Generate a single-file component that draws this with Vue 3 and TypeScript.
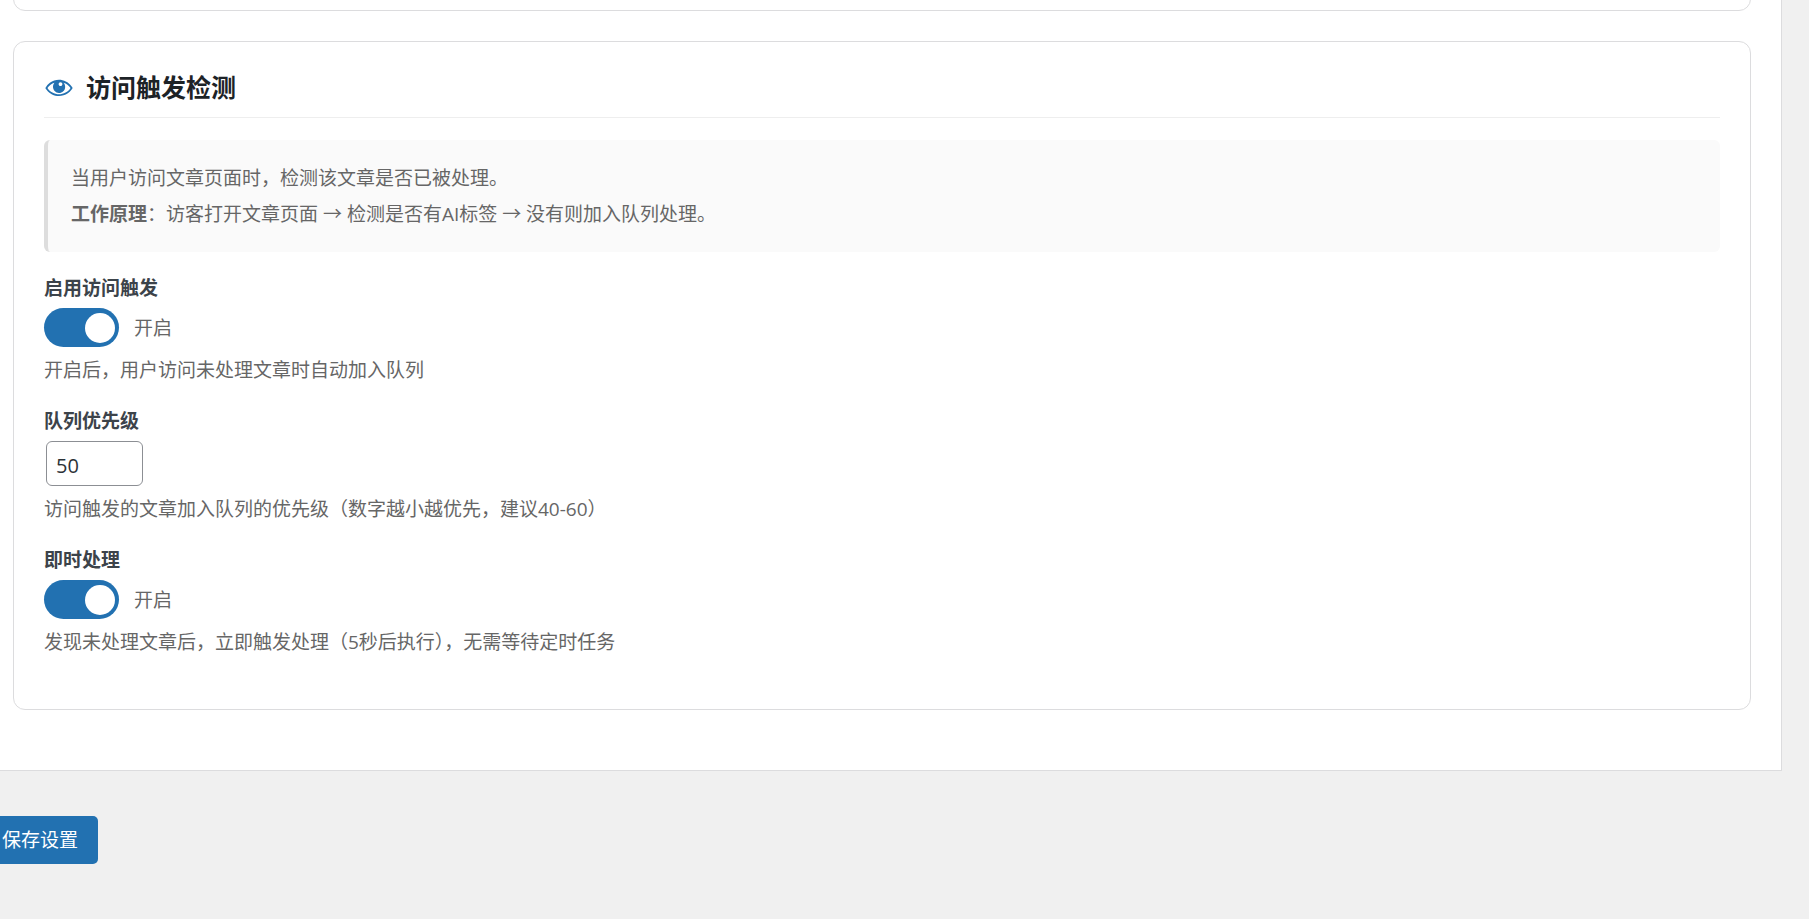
<script setup lang="ts">
import { ref } from 'vue'

const visitTrigger = ref<boolean>(true)
const priority = ref<number>(50)
const instantProcess = ref<boolean>(true)
</script>

<template>
  <form class="page" @submit.prevent>
    <main class="panel">
      <section class="card card-previous" aria-hidden="true"></section>

      <section class="card">
        <h2 class="card-title">
          <svg class="title-icon" viewBox="0 0 20 20" aria-hidden="true">
            <path
              d="M18.3 9.5C15 4.9 8.5 3.8 3.9 7.2c-1.2.9-2.2 2.1-3 3.4.2.4.5.8.8 1.2 3.3 4.6 9.6 5.6 14.2 2.4.9-.7 1.7-1.4 2.4-2.4.3-.4.5-.8.8-1.2-.3-.4-.5-.8-.8-1.1zm-8.2-2.3c.5-.5 1.3-.5 1.8 0s.5 1.3 0 1.8-1.3.5-1.8 0-.5-1.3 0-1.8zm-.1 7.7c-3.1 0-6-1.6-7.7-4.2C3.5 9 5.1 7.8 7 7.2c-.7.8-1 1.7-1 2.7 0 2.2 1.7 4.1 4 4.1 2.2 0 4.1-1.7 4.1-4v-.1c0-1-.4-2-1.1-2.7 1.9.6 3.5 1.8 4.7 3.5-1.7 2.6-4.6 4.2-7.7 4.2z"
            />
          </svg>
          <span>访问触发检测</span>
        </h2>

        <p class="notice">
          当用户访问文章页面时，检测该文章是否已被处理。<br />
          <strong>工作原理</strong>：访客打开文章页面 → 检测是否有AI标签 → 没有则加入队列处理。
        </p>

        <div class="field">
          <label class="field-label" for="visit-trigger">启用访问触发</label>
          <label class="switch-row">
            <input id="visit-trigger" v-model="visitTrigger" class="switch" type="checkbox" />
            <span>{{ visitTrigger ? '开启' : '关闭' }}</span>
          </label>
          <p class="hint">开启后，用户访问未处理文章时自动加入队列</p>
        </div>

        <div class="field">
          <label class="field-label" for="priority">队列优先级</label>
          <input id="priority" v-model="priority" class="number" type="number" min="1" max="100" />
          <p class="hint">访问触发的文章加入队列的优先级（数字越小越优先，建议40-60）</p>
        </div>

        <div class="field">
          <label class="field-label" for="instant-process">即时处理</label>
          <label class="switch-row">
            <input id="instant-process" v-model="instantProcess" class="switch" type="checkbox" />
            <span>{{ instantProcess ? '开启' : '关闭' }}</span>
          </label>
          <p class="hint">发现未处理文章后，立即触发处理（5秒后执行），无需等待定时任务</p>
        </div>
      </section>
    </main>

    <button class="save" type="submit">保存设置</button>
  </form>
</template>

<style>
body {
  margin: 0;
  background: #f0f0f0;
}
</style>

<style scoped>
.page {
  min-height: 100vh;
  padding-right: 27px;
  box-sizing: border-box;
  font-family: 'Open Sans', 'Noto Sans CJK SC', sans-serif;
  font-size: 19px;
  line-height: 30px;
  color: #666;
}

.panel {
  display: flex;
  flex-direction: column;
  gap: 30px;
  padding: 0 30px 60px 13px;
  overflow: hidden;
  background: #fff;
  border-right: 1px solid #dcdcde;
  border-bottom: 1px solid #dcdcde;
}

.card {
  padding: 30px;
  border: 1px solid #dcdcde;
  border-radius: 12px;
}

.card-previous {
  margin-top: -51px;
}

.card-title {
  display: flex;
  align-items: center;
  gap: 12px;
  margin: 0 0 22px;
  padding-bottom: 15px;
  border-bottom: 1px solid #eee;
  font-size: 25px;
  font-weight: 600;
  line-height: 30px;
  color: #1d2327;
}

.title-icon {
  width: 30px;
  height: 30px;
  fill: #2271b1;
}

.notice {
  margin: 0 0 22px;
  padding: 20px 23px;
  background: #fafafa;
  border-left: 4px solid #ddd;
  border-radius: 6px;
  line-height: 36px;
}

.field {
  margin-bottom: 22px;
}

.field-label {
  display: block;
  width: fit-content;
  margin-bottom: 6px;
  font-weight: 600;
  line-height: 28px;
  color: #3c434a;
}

.switch-row {
  display: flex;
  align-items: center;
  gap: 15px;
  width: fit-content;
}

.switch {
  display: flex;
  align-items: center;
  width: 75px;
  height: 39px;
  margin: 0;
  padding: 0 4px;
  box-sizing: border-box;
  appearance: none;
  background: #ccc;
  border-radius: 20px;
  cursor: pointer;
}

.switch::before {
  content: '';
  width: 30px;
  height: 30px;
  background: #fff;
  border-radius: 50%;
}

.switch:checked {
  justify-content: flex-end;
  background: #2271b1;
}

.number {
  display: block;
  width: 97px;
  height: 45px;
  margin: 0 2px;
  padding: 4px 9px 0;
  box-sizing: border-box;
  appearance: textfield;
  background: #fff;
  border: 1px solid #8c8f94;
  border-radius: 6px;
  font: inherit;
  font-size: 20px;
  color: #2c3338;
}

.hint {
  margin: 8px 0 0;
}

.save {
  display: block;
  height: 48px;
  margin-top: 45px;
  padding: 0 20px 0 2px;
  background: #2271b1;
  border: 0;
  border-radius: 0 5px 5px 0;
  font: inherit;
  color: #fff;
  cursor: pointer;
}
</style>
